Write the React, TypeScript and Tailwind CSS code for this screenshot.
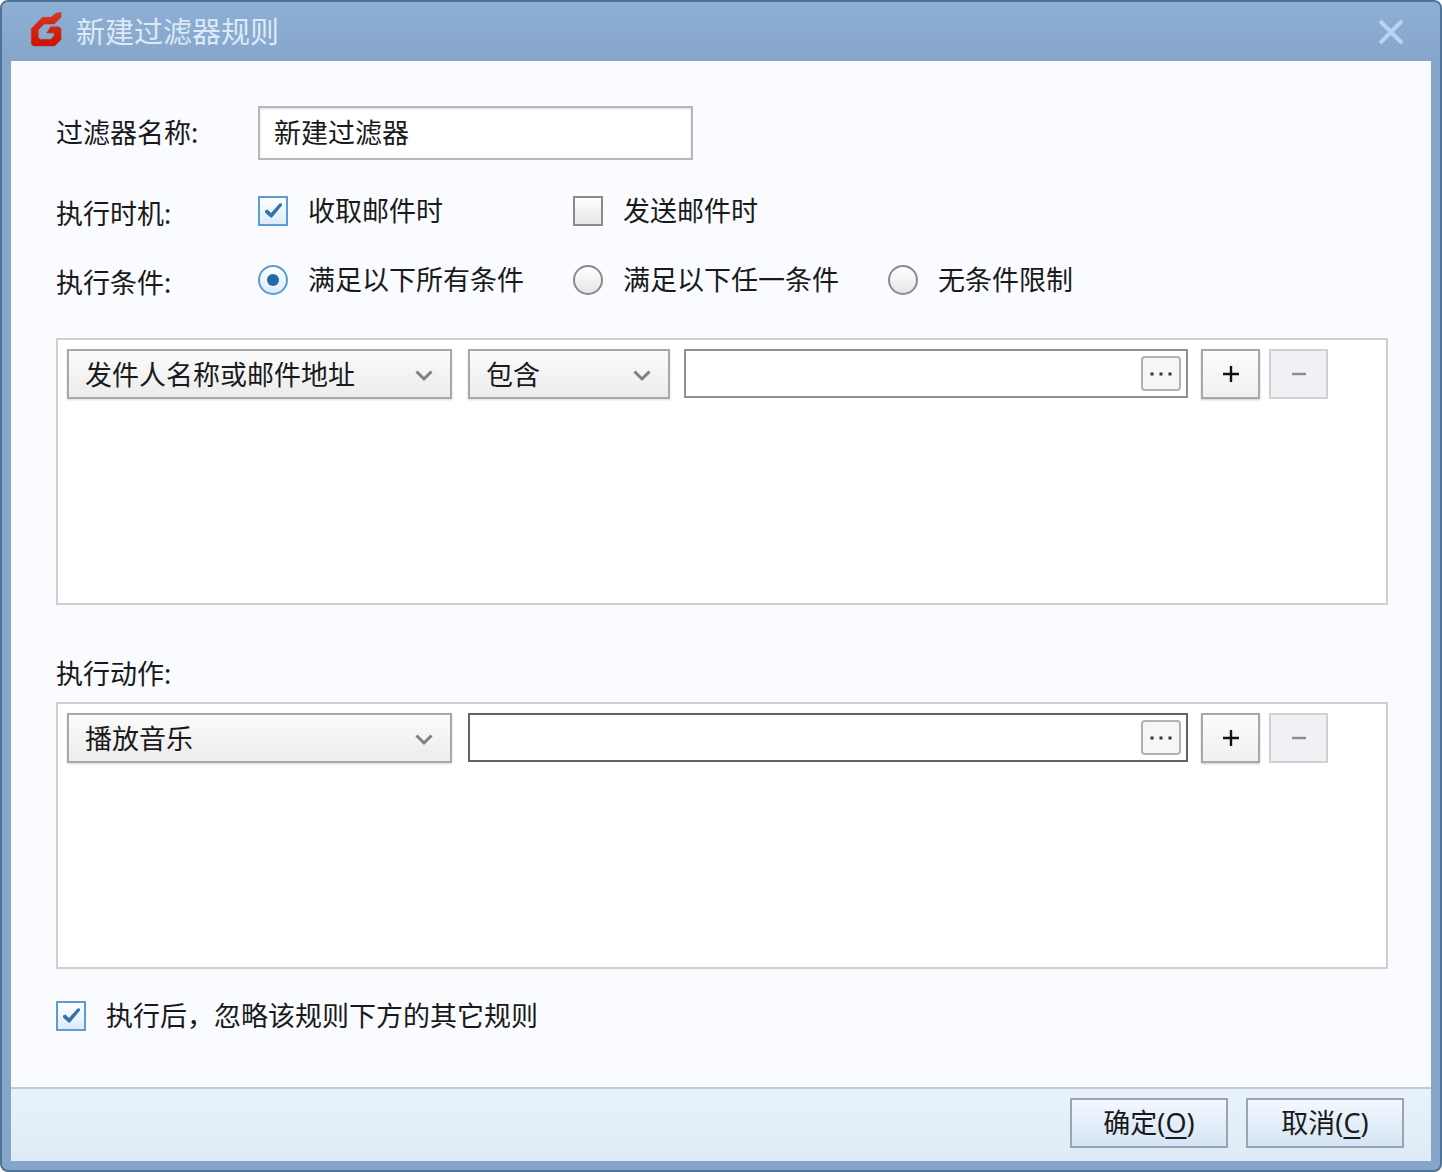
import { useState } from "react";
import type { ReactNode } from "react";

const Logo = () => (
  <svg width="32" height="40" viewBox="-1 0 32 40" aria-hidden="true">
    <defs>
      <linearGradient id="logo-red" x1="0" y1="0" x2="0" y2="1">
        <stop offset="0" stopColor="#e2331c" />
        <stop offset="1" stopColor="#c81400" />
      </linearGradient>
    </defs>
    <path
      fill="url(#logo-red)"
      stroke="#b03a35"
      strokeWidth="0.500"
      strokeLinejoin="round"
      d="M0.300 16.700L11.300 5.300H20L25 1.200L30 0.300V5.300L23.300 12H13.300L7.300 17.700V25.300L9 27.300H19.700L23 23.700V21H15.700L19.700 14.700H28L30 16.700V27.700L23.700 34H2.300L0.300 32Z"
    />
  </svg>
);

const CheckMark = () => (
  <svg
    className="pointer-events-none col-start-1 row-start-1 hidden peer-checked:block"
    width="20"
    height="20"
    viewBox="0 0 20 20"
    aria-hidden="true"
  >
    <path d="M2 9.500L4.500 8.500L8 12L16.500 2.500H19V4.500L9 16.500H7.500L2 11.500Z" fill="#3272ad" />
  </svg>
);

type CheckProps = {
  label: string;
  defaultChecked?: boolean;
};

const CheckOption = ({ label, defaultChecked }: CheckProps) => (
  <label className="flex items-center gap-5">
    <span className="grid size-[30px] place-items-center">
      <input
        type="checkbox"
        defaultChecked={defaultChecked}
        className="peer col-start-1 row-start-1 size-[30px] appearance-none border-2 border-[#8a8a8a] bg-linear-to-b from-white to-[#e6e6e6] checked:border-[#5c9bd3] checked:from-white checked:to-[#dcecfb]"
      />
      <CheckMark />
    </span>
    {label}
  </label>
);

const RadioOption = ({ label, defaultChecked }: CheckProps) => (
  <label className="flex items-center gap-5">
    <span className="grid size-[30px] place-items-center">
      <input
        type="radio"
        name="condition"
        defaultChecked={defaultChecked}
        className="peer col-start-1 row-start-1 size-[30px] appearance-none rounded-full border-2 border-[#8a8a8a] bg-linear-to-b from-white to-[#e6e6e6] checked:border-[#5c9bd3] checked:from-white checked:to-[#dcecfb]"
      />
      <span className="pointer-events-none col-start-1 row-start-1 hidden size-3 rounded-full bg-[#2568a8] peer-checked:block" />
    </span>
    {label}
  </label>
);

type DropDownProps = {
  label: string;
  options: string[];
  className: string;
};

const DropDown = ({ label, options, className }: DropDownProps) => (
  <div className={`relative h-[50px] shrink-0 ${className}`}>
    <select
      aria-label={label}
      className="size-full appearance-none border-2 border-[#a8a8a8] bg-linear-to-b from-[#fbfbfb] to-[#ececec] pt-0.5 pl-4 shadow-[0_1px_2px_rgba(0,0,0,0.15)]"
    >
      {options.map((option) => (
        <option key={option}>{option}</option>
      ))}
    </select>
    <svg
      className="pointer-events-none absolute top-5 right-4"
      width="22"
      height="14"
      viewBox="0 0 22 14"
      aria-hidden="true"
    >
      <path
        d="M2.500 2.500L10 10L17.500 2.500"
        fill="none"
        stroke="#808080"
        strokeWidth="3"
      />
    </svg>
  </div>
);

const BrowseInput = ({ label, border }: { label: string; border: string }) => (
  <div
    className={`mr-[13px] flex h-[49px] min-w-0 flex-1 items-center border-2 bg-white pr-[5px] ${border}`}
  >
    <input
      type="text"
      aria-label={label}
      className="h-full min-w-0 flex-1 px-3 outline-none"
    />
    <button
      type="button"
      aria-label="浏览"
      className="flex h-[35px] w-10 items-center justify-center rounded border-2 border-[#b2b2b2] bg-[#f6f6f6]"
    >
      <svg width="22" height="4" viewBox="0 0 22 4" fill="#333333">
        <rect x="0.500" y="0.500" width="3" height="3" />
        <rect x="9.500" y="0.500" width="3" height="3" />
        <rect x="18.500" y="0.500" width="3" height="3" />
      </svg>
    </button>
  </div>
);

const RowButtons = () => (
  <div className="mr-[49px] flex gap-[9px]">
    <button
      type="button"
      aria-label="添加"
      className="flex h-[50px] w-[59px] items-center justify-center border-2 border-[#a8a8a8] bg-linear-to-b from-[#fcfcfc] to-[#f0f0f0] shadow-[0_1px_2px_rgba(0,0,0,0.2)]"
    >
      <svg width="16" height="16" viewBox="0 0 16 16" stroke="#111111">
        <path d="M0 8H16M8 0V16" strokeWidth="2.400" />
      </svg>
    </button>
    <button
      type="button"
      aria-label="删除"
      disabled
      className="flex h-[50px] w-[59px] items-center justify-center border-2 border-[#d0d0d0] bg-[#eff1f4]"
    >
      <svg width="14" height="16" viewBox="0 0 14 16" stroke="#8c8c8c">
        <path d="M0 8H14" strokeWidth="2.400" />
      </svg>
    </button>
  </div>
);

const Panel = ({ children }: { children: ReactNode }) => (
  <div className="h-[267px] border-2 border-[#cfcfcf] bg-white p-[9px]">
    <div className="flex">{children}</div>
  </div>
);

const footerButton =
  "flex h-[50px] w-[158px] items-center justify-center border-2 border-[#9aa5b0] bg-linear-to-b from-[#f3f8fe] to-[#d5e5f5]";

const App = () => {
  const [name, setName] = useState("新建过滤器");

  return (
    <div className="flex min-h-screen flex-col rounded-lg border-2 border-[#4f7396] bg-[#86a5cb] text-[27px] leading-10 text-[#1a1a1a] [font-family:'Noto_Sans','Noto_Sans_CJK_SC',sans-serif]">
      <header className="flex h-[59px] items-center gap-3.5 rounded-t-md bg-linear-to-b from-[#8eafd5] to-[#86a5cb] pr-9 pl-7">
        <Logo />
        <h1 className="flex-1 text-[29px] text-[#dce9f7]">新建过滤器规则</h1>
        <button type="button" aria-label="关闭">
          <svg width="28" height="28" viewBox="0 0 28 28" aria-hidden="true">
            <path
              d="M4 3L26 25M26 3L4 25"
              fill="none"
              stroke="#bdd3ec"
              strokeWidth="4"
            />
          </svg>
        </button>
      </header>

      <main className="mx-[9px] flex flex-1 flex-col bg-[#f9fbff] pt-[45px] pr-[43px] pl-[45px]">
        <div className="flex h-[54px] items-center">
          <label htmlFor="filter-name" className="w-[202px] shrink-0">
            过滤器名称:
          </label>
          <input
            id="filter-name"
            type="text"
            value={name}
            onChange={(e) => setName(e.target.value)}
            className="h-[54px] w-[435px] border-2 border-[#b8b8b8] bg-white px-3.5 pb-1 shadow-[inset_0_1px_2px_rgba(0,0,0,0.15)] outline-none"
          />
        </div>

        <div className="mt-[31px] flex h-10 items-center">
          <div className="w-[202px] shrink-0 pt-1.5">执行时机:</div>
          <div className="grid grid-cols-[315px_315px_auto]">
            <CheckOption label="收取邮件时" defaultChecked />
            <CheckOption label="发送邮件时" />
          </div>
        </div>

        <div className="mt-[29px] flex h-10 items-center">
          <div className="w-[202px] shrink-0 pt-1.5">执行条件:</div>
          <div className="grid grid-cols-[315px_315px_auto]">
            <RadioOption label="满足以下所有条件" defaultChecked />
            <RadioOption label="满足以下任一条件" />
            <RadioOption label="无条件限制" />
          </div>
        </div>

        <div className="mt-[38px]">
          <Panel>
            <DropDown
              label="条件字段"
              options={["发件人名称或邮件地址"]}
              className="mr-4 w-[385px]"
            />
            <DropDown
              label="匹配方式"
              options={["包含"]}
              className="mr-3.5 w-[202px]"
            />
            <BrowseInput label="条件内容" border="border-[#8f8f8f]" />
            <RowButtons />
          </Panel>
        </div>

        <div className="mt-[49px] mb-2">执行动作:</div>
        <Panel>
          <DropDown
            label="动作"
            options={["播放音乐"]}
            className="mr-4 w-[385px]"
          />
          <BrowseInput label="音乐文件" border="border-[#636363]" />
          <RowButtons />
        </Panel>

        <div className="mt-[27px] flex">
          <CheckOption label="执行后，忽略该规则下方的其它规则" defaultChecked />
        </div>
      </main>

      <footer className="mx-[9px] mb-[9px] flex justify-end gap-[18px] border-t-2 border-[#c3cad3] bg-linear-to-b from-[#e8f2fb] to-[#deebf6] pt-[9px] pr-[27px] pb-[13px]">
        <button type="button" className={footerButton}>
          确定(<u className="underline-offset-4">O</u>)
        </button>
        <button type="button" className={footerButton}>
          取消(<u className="underline-offset-4">C</u>)
        </button>
      </footer>
    </div>
  );
};

export default App;
